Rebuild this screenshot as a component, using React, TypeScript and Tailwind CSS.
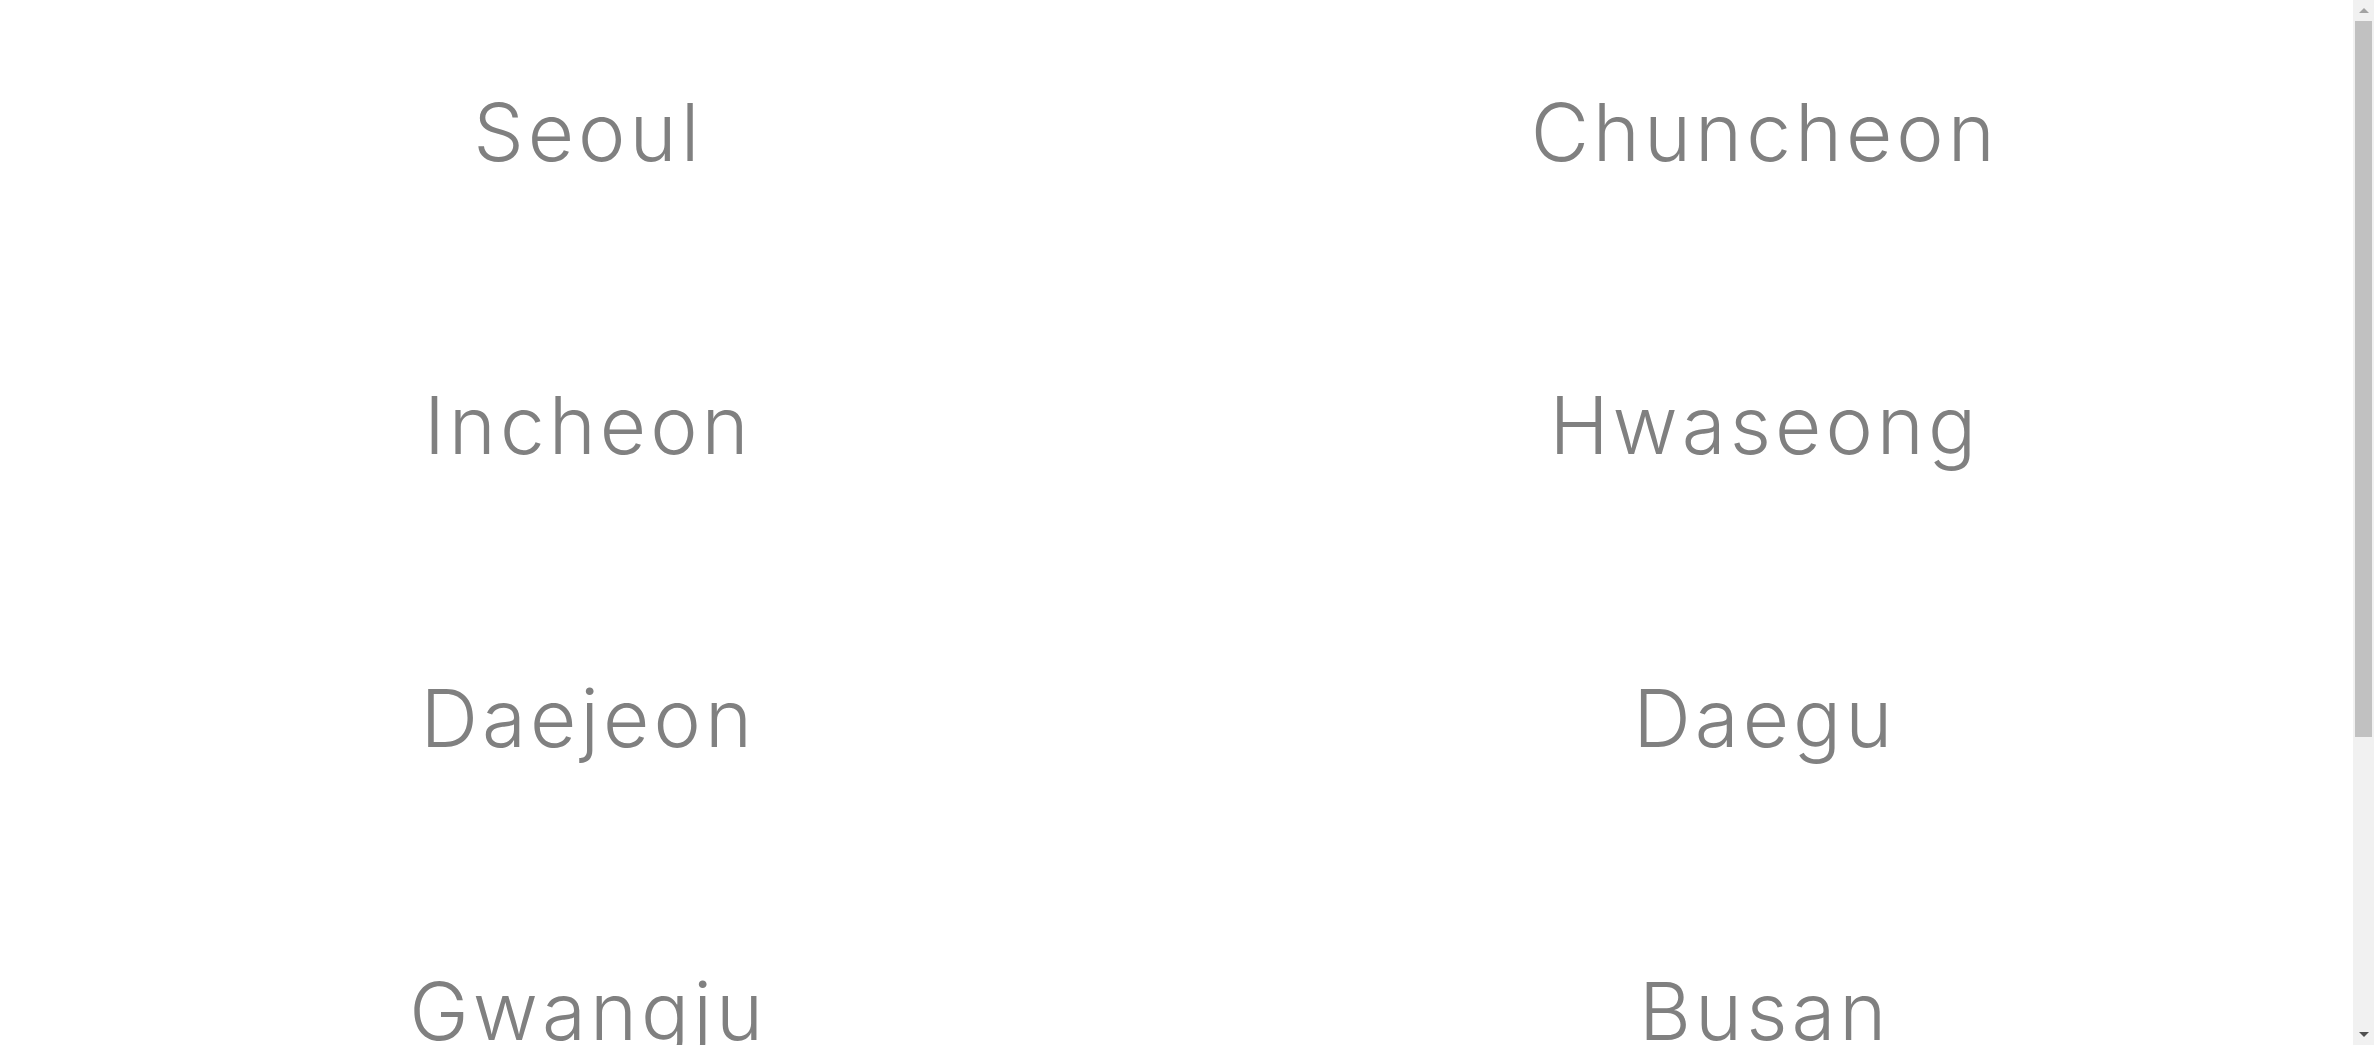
const cities = [
  'Seoul',
  'Chuncheon',
  'Incheon',
  'Hwaseong',
  'Daejeon',
  'Daegu',
  'Gwangju',
  'Busan',
  'Ulsan',
  'Jeju',
]

// drawn stand-in for the browser's scrollbar
const Scrollbar = () => (
  <div className="sticky top-0 flex h-screen w-[21px] shrink-0 flex-col bg-[#f1f1f1]">
    <div className="flex h-[21px] items-center justify-center">
      <div className="h-0 w-0 border-x-[5px] border-b-[5px] border-x-transparent border-b-[#a3a3a3]" />
    </div>
    <div className="mx-[2px] h-[716px] bg-[#c1c1c1]" />
    <div className="flex-1" />
    <div className="flex h-[21px] items-center justify-center">
      <div className="h-0 w-0 border-x-[5px] border-t-[5px] border-x-transparent border-t-[#505050]" />
    </div>
  </div>
)

export default function App() {
  return (
    <div className="flex items-start bg-white font-['Inter',sans-serif]">
      <main className="grid flex-1 grid-cols-2">
        {cities.map((city) => (
          <div key={city} className="flex h-[293px] justify-center pt-[92px]">
            <span className="text-[80px] leading-none font-light tracking-[0.05em] text-[#808080]">
              {city}
            </span>
          </div>
        ))}
      </main>

      <Scrollbar />
    </div>
  )
}
